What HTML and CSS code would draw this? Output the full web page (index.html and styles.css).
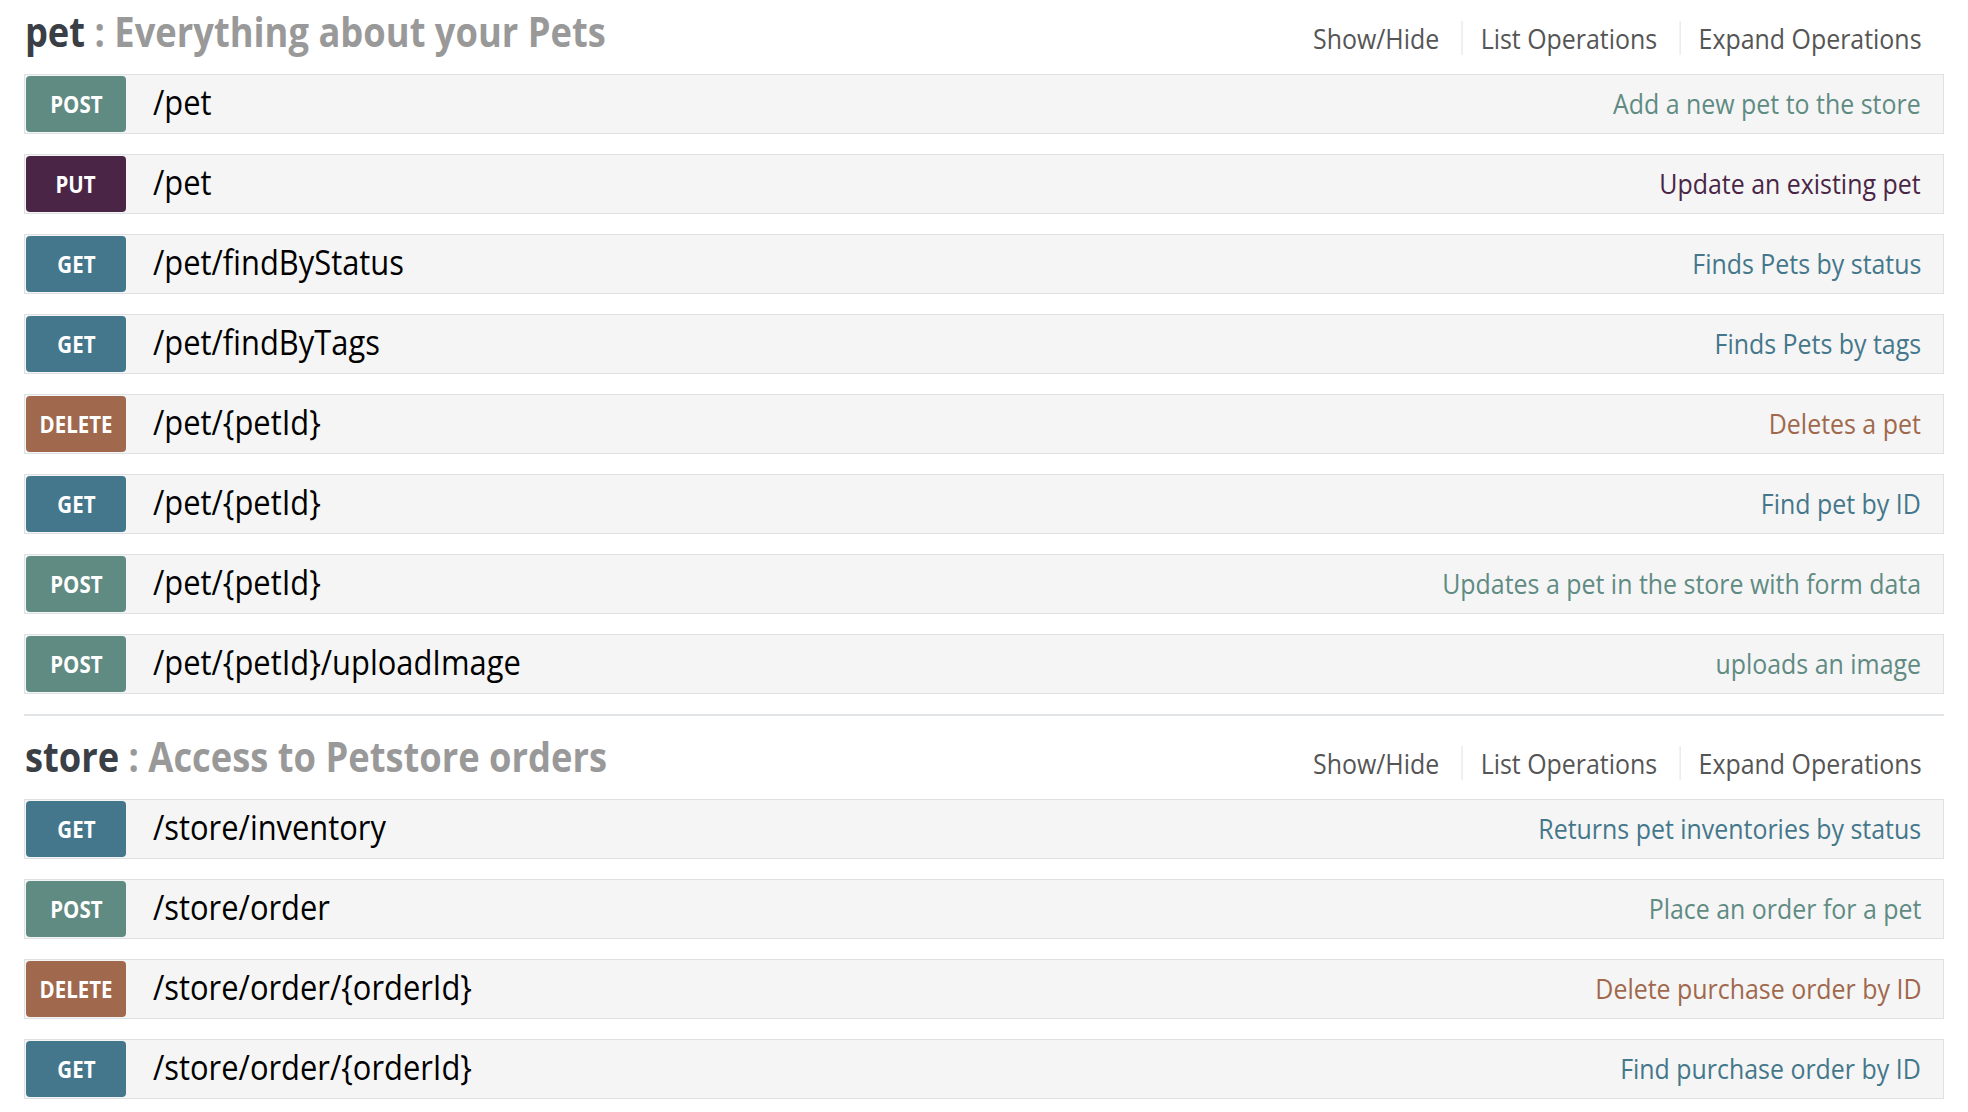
FILE: index.html
```html
<!DOCTYPE html>
<html lang="en">
<head>
<meta charset="utf-8">
<title>Swagger Petstore</title>
<link rel="stylesheet" href="styles.css">
</head>
<body>
<div class="page">
  <section class="resource">
    <div class="resource-head">
      <h2 class="title"><span class="tag">pet</span> : Everything about your Pets</h2>
      <ul class="links">
        <li>Show/Hide</li>
        <li>List Operations</li>
        <li>Expand Operations</li>
      </ul>
    </div>
    <ul class="ops">
      <li class="op post"><span class="method"><span class="sq">POST</span></span><span class="path"><span class="sq">/pet</span></span><span class="desc"><span class="sq">Add a new pet to the store</span></span></li>
      <li class="op put"><span class="method"><span class="sq">PUT</span></span><span class="path"><span class="sq">/pet</span></span><span class="desc"><span class="sq">Update an existing pet</span></span></li>
      <li class="op get"><span class="method"><span class="sq">GET</span></span><span class="path"><span class="sq">/pet/findByStatus</span></span><span class="desc"><span class="sq">Finds Pets by status</span></span></li>
      <li class="op get"><span class="method"><span class="sq">GET</span></span><span class="path"><span class="sq">/pet/findByTags</span></span><span class="desc"><span class="sq">Finds Pets by tags</span></span></li>
      <li class="op delete"><span class="method"><span class="sq">DELETE</span></span><span class="path"><span class="sq">/pet/{petId}</span></span><span class="desc"><span class="sq">Deletes a pet</span></span></li>
      <li class="op get"><span class="method"><span class="sq">GET</span></span><span class="path"><span class="sq">/pet/{petId}</span></span><span class="desc"><span class="sq">Find pet by ID</span></span></li>
      <li class="op post"><span class="method"><span class="sq">POST</span></span><span class="path"><span class="sq">/pet/{petId}</span></span><span class="desc"><span class="sq">Updates a pet in the store with form data</span></span></li>
      <li class="op post"><span class="method"><span class="sq">POST</span></span><span class="path"><span class="sq">/pet/{petId}/uploadImage</span></span><span class="desc"><span class="sq">uploads an image</span></span></li>
    </ul>
  </section>
  <section class="resource">
    <div class="resource-head">
      <h2 class="title"><span class="tag">store</span> : Access to Petstore orders</h2>
      <ul class="links">
        <li>Show/Hide</li>
        <li>List Operations</li>
        <li>Expand Operations</li>
      </ul>
    </div>
    <ul class="ops">
      <li class="op get"><span class="method"><span class="sq">GET</span></span><span class="path"><span class="sq">/store/inventory</span></span><span class="desc"><span class="sq">Returns pet inventories by status</span></span></li>
      <li class="op post"><span class="method"><span class="sq">POST</span></span><span class="path"><span class="sq">/store/order</span></span><span class="desc"><span class="sq">Place an order for a pet</span></span></li>
      <li class="op delete"><span class="method"><span class="sq">DELETE</span></span><span class="path"><span class="sq">/store/order/{orderId}</span></span><span class="desc"><span class="sq">Delete purchase order by ID</span></span></li>
      <li class="op get"><span class="method"><span class="sq">GET</span></span><span class="path"><span class="sq">/store/order/{orderId}</span></span><span class="desc"><span class="sq">Find purchase order by ID</span></span></li>
    </ul>
  </section>
</div>
</body>
</html>
```
FILE: styles.css
```css
* { box-sizing: border-box; }

body {
  margin: 0;
  background: #ffffff;
  font-family: "Open Sans", "Noto Sans", sans-serif;
}

.page {
  padding: 0 24px;
  margin-top: -9px;
}

.resource {
  border-bottom: 2px solid #e1e4e6;
}

.resource-head {
  display: flex;
  justify-content: space-between;
  height: 83px;
}

.title {
  margin: 0;
  padding: 20px 0 0 1px;
  font-size: 40.8px;
  line-height: 40px;
  font-weight: 700;
  color: #999999;
  white-space: nowrap;
  transform: scaleX(0.89);
  transform-origin: left top;
}

.title .tag {
  color: #3a3e45;
}

.links {
  list-style: none;
  margin: 0;
  padding: 30px 0 0;
  display: flex;
  align-items: flex-start;
  transform: scaleX(0.89);
  transform-origin: right top;
}

.links li {
  font-size: 28px;
  line-height: 34px;
  color: #555555;
  padding: 0 25px 0 20.5px;
  white-space: nowrap;
}

.links li:first-child {
  padding-left: 0;
}

.links li + li {
  border-left: 1px solid #dddddd;
}

.ops {
  list-style: none;
  margin: 0;
  padding: 0;
}

.op {
  display: flex;
  align-items: center;
  height: 60px;
  padding: 0 1px;
  border: 1px solid #dde1e4;
  background: #f5f5f5;
  margin-bottom: 20px;
}

.sq {
  display: inline-block;
  line-height: 1;
  white-space: nowrap;
  transform: scaleX(0.89);
}

.method {
  flex: none;
  width: 100px;
  height: 56px;
  border-radius: 4px;
  display: flex;
  align-items: center;
  justify-content: center;
  color: #ffffff;
  font-weight: 700;
  font-size: 23px;
}

.path {
  flex: none;
  margin-left: 27px;
  padding-bottom: 6px;
  font-size: 34.7px;
  color: #000000;
}

.path .sq {
  transform-origin: left center;
}

.desc {
  margin-left: auto;
  padding-right: 21px;
  padding-bottom: 2px;
  font-size: 28px;
}

.desc .sq {
  transform-origin: right center;
}

.post .method { background: #5f8b83; }
.post .desc { color: #5f8b83; }

.put .method { background: #4a2545; }
.put .desc { color: #4a2545; }

.get .method { background: #44778b; }
.get .desc { color: #44778b; }

.delete .method { background: #a0684c; }
.delete .desc { color: #a0684c; }
```
